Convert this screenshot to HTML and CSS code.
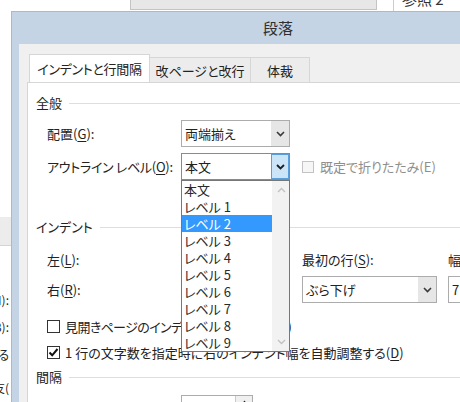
FILE: index.html
```html
<!DOCTYPE html>
<html lang="ja">
<head>
<meta charset="utf-8">
<title>段落</title>
<link rel="stylesheet" href="styles.css">
</head>
<body>
<div class="bg-window">
  <div class="bg-ribbon"></div>
  <div class="bg-divider"></div>
  <div class="bg-ref">参照 2</div>
  <div class="bg-band"></div>
  <div class="bg-labels">
    <span class="bl bl1">(I):</span>
    <span class="bl bl2">(B):</span>
    <span class="bl bl3">てる</span>
    <span class="bl bl4">友(</span>
  </div>
</div>

<div class="dialog">
  <div class="titlebar">段落</div>
  <div class="dlg-body">
    <div class="tabs">
      <div class="tab tab-active">インデントと行間隔</div>
      <div class="tab tab2">改ページと改行</div>
      <div class="tab tab3">体裁</div>
    </div>
    <div class="panel">
      <div class="ghead">全般</div>

      <div class="frow r1">
        <div class="lbl">配置(<u>G</u>):</div>
        <div class="select">
          <span class="val">両端揃え</span>
          <span class="btn"><svg width="9" height="6" viewBox="0 0 9 6"><path d="M1 1 L4.5 4.5 L8 1" fill="none" stroke="#3a3a3a" stroke-width="1.6"/></svg></span>
        </div>
      </div>

      <div class="frow r2">
        <div class="lbl lbl-tight">アウトライン レベル(<u>O</u>):</div>
        <div class="select-wrap">
          <div class="select select-open">
            <span class="val">本文</span>
            <span class="btn btn-hot"><svg width="9" height="6" viewBox="0 0 9 6"><path d="M1 1 L4.5 4.5 L8 1" fill="none" stroke="#1e1e1e" stroke-width="1.8"/></svg></span>
          </div>
          <div class="dropdown">
            <div class="list">
              <div class="item">本文</div>
              <div class="item">レベル 1</div>
              <div class="item item-sel">レベル 2</div>
              <div class="item">レベル 3</div>
              <div class="item">レベル 4</div>
              <div class="item">レベル 5</div>
              <div class="item">レベル 6</div>
              <div class="item">レベル 7</div>
              <div class="item">レベル 8</div>
              <div class="item">レベル 9</div>
            </div>
            <div class="scroll">
              <svg width="9" height="6" viewBox="0 0 9 6"><path d="M1 5 L4.5 1.5 L8 5" fill="none" stroke="#c2c2c2" stroke-width="1.4"/></svg>
              <svg width="9" height="6" viewBox="0 0 9 6"><path d="M1 1 L4.5 4.5 L8 1" fill="none" stroke="#c2c2c2" stroke-width="1.4"/></svg>
            </div>
          </div>
        </div>
        <div></div>
        <div class="chk-line disabled">
          <span class="box box-dis"></span>
          <span>既定で折りたたみ(E)</span>
        </div>
      </div>

      <div class="ghead gh2">インデント</div>

      <div class="igrid">
        <div class="lbl">左(<u>L</u>):</div>
        <div class="spin"><span class="val">0 字</span><span class="sbtn"></span></div>
        <div class="lbl">最初の行(<u>S</u>):</div>
        <div></div>
        <div class="lbl">幅(<u>Y</u>):</div>

        <div class="lbl">右(<u>R</u>):</div>
        <div class="spin"><span class="val">0 字</span><span class="sbtn"></span></div>
        <div class="select">
          <span class="val">ぶら下げ</span>
          <span class="btn"><svg width="9" height="6" viewBox="0 0 9 6"><path d="M1 1 L4.5 4.5 L8 1" fill="none" stroke="#3a3a3a" stroke-width="1.6"/></svg></span>
        </div>
        <div></div>
        <div class="textbox"><span class="val">7 字</span></div>
      </div>

      <div class="crow c1">
        <span class="box"></span>
        <span class="c1-text">見開きページのインデント幅を設定する(<u>M</u>)</span>
      </div>
      <div class="crow c2">
        <span class="box"><svg width="11" height="11" viewBox="0 0 11 11"><path d="M1.5 5.5 L4.2 8.3 L9.5 2" fill="none" stroke="#111" stroke-width="2"/></svg></span>
        <span>1 行の文字数を指定時に右のインデント幅を自動調整する(<u>D</u>)</span>
      </div>

      <div class="ghead gh3">間隔</div>

      <div class="igrid bottom">
        <div class="lbl">段落前(<u>B</u>):</div>
        <div class="spin"><span class="val">0 行</span><span class="sbtn"><svg width="7" height="5" viewBox="0 0 7 5"><path d="M0 5 L3.5 0.5 L7 5 Z" fill="#222"/></svg></span></div>
        <div class="lbl">行間(<u>N</u>):</div>
        <div></div>
        <div class="lbl">間隔(<u>A</u>):</div>
      </div>
    </div>
  </div>
</div>
</body>
</html>
```

FILE: styles.css
```css
* { box-sizing: border-box; }
html, body { margin: 0; padding: 0; }
body {
  width: 460px;
  height: 402px;
  overflow: hidden;
  position: relative;
  background: #fff;
  font-family: "Noto Sans CJK JP", "Noto Sans", sans-serif;
  font-size: 13px;
  color: #222;
  font-feature-settings: "palt";
}
u { text-decoration: underline; text-underline-offset: 2px; }

/* background application window */
.bg-window { position: absolute; left: 0; top: 0; width: 460px; height: 402px; background: #fff; }
.bg-ribbon { position: absolute; left: 130px; top: -1px; width: 247px; height: 11px; background: #e7e7e7; border: 1px solid #c4c4c4; }
.bg-divider { position: absolute; left: 393px; top: 0; width: 1px; height: 11px; background: #cdcdcd; }
.bg-ref { position: absolute; left: 402px; top: -11px; font-size: 15px; line-height: 20px; color: #333; }
.bg-band { position: absolute; left: 0; top: 217px; width: 11px; height: 29px; background: #ececec; border-bottom: 1px solid #d4d4d4; }
.bg-labels { position: absolute; left: 0; top: 0; width: 10px; height: 402px; overflow: hidden; }
.bl { position: absolute; right: 1px; white-space: nowrap; font-size: 12px; line-height: 16px; color: #222; }
.bl1 { top: 292px; }
.bl2 { top: 319px; }
.bl3 { top: 347px; }
.bl4 { top: 380px; }

/* dialog window */
.dialog {
  position: absolute;
  left: 11px;
  top: 11px;
  width: 534px;
  height: 430px;
  background: #c5d4e4;
  border: 1px solid #a7bacf;
  display: flex;
  flex-direction: column;
}
.titlebar {
  height: 32px;
  flex: none;
  display: flex;
  align-items: center;
  justify-content: center;
  padding-bottom: 2px;
  font-size: 15px;
  color: #2e2e2e;
}
.dlg-body {
  flex: 1;
  margin: 0 7px 7px 7px;
  background: #f0f0f0;
  padding: 10px 0 0 8px;
  display: flex;
  flex-direction: column;
}
.tabs {
  flex: none;
  height: 29px;
  margin-left: 2px;
  margin-bottom: -1px;
  display: flex;
  align-items: flex-end;
}
.tab {
  border: 1px solid #d6d6d6;
  border-bottom: none;
  text-align: center;
  line-height: 20px;
  color: #222;
  white-space: nowrap;
}
.tab-active {
  width: 121px;
  height: 29px;
  background: #fff;
  padding-top: 4px;
  letter-spacing: -0.3px;
}
.tab2, .tab3 {
  height: 25px;
  margin-bottom: 1px;
  border-left: none;
  background: #ececec;
  padding-top: 3px;
}
.tab2 { width: 101px; }
.tab3 { width: 59px; }

.panel {
  flex: 1;
  background: #fff;
  border: 1px solid #d6d6d6;
  padding: 10px 0 0 8px;
}

.ghead {
  display: flex;
  align-items: center;
  gap: 7px;
  height: 20px;
  line-height: 20px;
}
.ghead::after { content: ""; flex: 1; height: 1px; background: #dedede; }
.gh2 { margin-top: 37px; }
.gh3 { margin-top: 5px; }

.lbl { white-space: nowrap; line-height: 18px; }
.lbl-tight { letter-spacing: -0.3px; }

.frow {
  display: grid;
  grid-template-columns: 134px 109px 12px 1fr;
  align-items: center;
  height: 27px;
  margin-left: 11px;
}
.r1 { margin-top: 7px; }
.r2 { margin-top: 6px; }

.select {
  height: 27px;
  border: 1px solid #acacac;
  background: #fff;
  display: flex;
  align-items: stretch;
}
.select .val { flex: 1; padding-left: 3px; line-height: 25px; white-space: nowrap; }
.select .btn {
  width: 18px;
  background: #e6e6e6;
  display: flex;
  align-items: center;
  justify-content: center;
}
.select-open { border-color: #8a8a8a; }
.select .btn-hot { background: #cce4f7; border: 1px solid #5a9fdc; }

.select-wrap { position: relative; height: 27px; }
.dropdown {
  position: absolute;
  left: 0;
  top: 100%;
  width: 109px;
  height: 172px;
  z-index: 10;
  background: #fff;
  border: 1px solid #777;
  display: flex;
}
.list { flex: 1; }
.item { height: 17px; line-height: 17px; padding-left: 2px; white-space: nowrap; color: #2a2a2a; }
.item-sel { background: #3399ff; color: #fff; }
.scroll {
  width: 17px;
  background: #f2f2f2;
  display: flex;
  flex-direction: column;
  justify-content: space-between;
  align-items: center;
  padding: 6px 0 6px 2px;
}

.chk-line { display: flex; align-items: center; gap: 6px; white-space: nowrap; }
.disabled { color: #8e8e8e; }
.box {
  width: 13px;
  height: 13px;
  flex: none;
  border: 1px solid #333;
  background: #fff;
  display: flex;
  align-items: center;
  justify-content: center;
}
.box-dis { width: 12px; height: 12px; border-color: #c3c3c3; background: #f6f6f6; }

.igrid {
  display: grid;
  grid-template-columns: 134px 121px 135px 11px 1fr;
  grid-template-rows: 27px 27px;
  row-gap: 3px;
  align-items: center;
  margin: 9px 0 0 11px;
}
.igrid.bottom { grid-template-rows: 27px; margin-top: 8px; }
.spin {
  width: 72px;
  height: 27px;
  border: 1px solid #acacac;
  background: #fff;
  display: flex;
}
.spin .val { flex: 1; padding-left: 3px; line-height: 25px; white-space: nowrap; }
.spin .sbtn {
  width: 17px;
  border-left: 1px solid #c9c9c9;
  background: #f0f0f0;
  display: flex;
  justify-content: center;
  padding-top: 4px;
}
.textbox {
  height: 27px;
  border: 1px solid #acacac;
  background: #fff;
  padding-left: 3px;
  line-height: 25px;
  white-space: nowrap;
}

.crow {
  display: flex;
  align-items: center;
  gap: 5px;
  height: 20px;
  margin-left: 11px;
  white-space: nowrap;
}
.c1 { margin-top: 13px; }
.c2 { margin-top: 6px; }
.c1-text { letter-spacing: -0.6px; }
```
